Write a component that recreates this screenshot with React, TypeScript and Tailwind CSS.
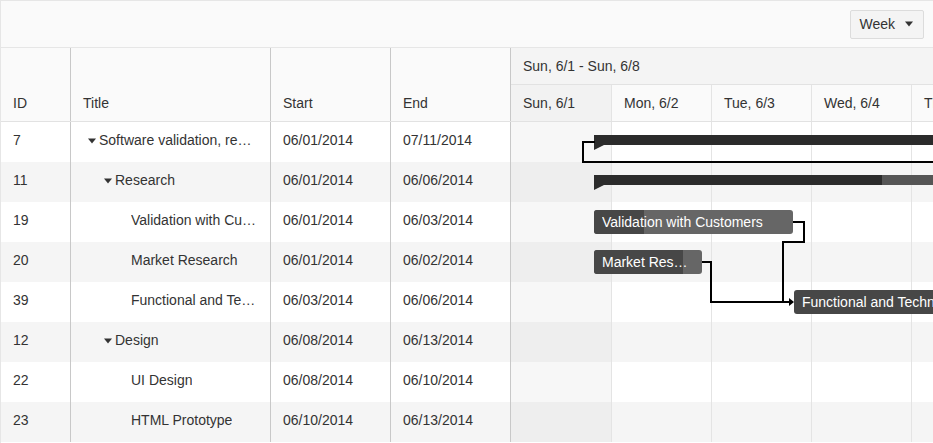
import React from "react";

type Row = {
  id: number;
  title: string;
  level: number;
  expandable: boolean;
  start: string;
  end: string;
};

const rows: Row[] = [
  { id: 7, title: "Software validation, research and implementation", level: 0, expandable: true, start: "06/01/2014", end: "07/11/2014" },
  { id: 11, title: "Research", level: 1, expandable: true, start: "06/01/2014", end: "06/06/2014" },
  { id: 19, title: "Validation with Customers", level: 2, expandable: false, start: "06/01/2014", end: "06/03/2014" },
  { id: 20, title: "Market Research", level: 2, expandable: false, start: "06/01/2014", end: "06/02/2014" },
  { id: 39, title: "Functional and Technical Specification", level: 2, expandable: false, start: "06/03/2014", end: "06/06/2014" },
  { id: 12, title: "Design", level: 1, expandable: true, start: "06/08/2014", end: "06/13/2014" },
  { id: 22, title: "UI Design", level: 2, expandable: false, start: "06/08/2014", end: "06/10/2014" },
  { id: 23, title: "HTML Prototype", level: 2, expandable: false, start: "06/10/2014", end: "06/13/2014" },
];

const days = ["Sun, 6/1", "Mon, 6/2", "Tue, 6/3", "Wed, 6/4", "Thu, 6/5", "Fri, 6/6", "Sat, 6/7"];

function Caret() {
  return (
    <svg width="8" height="6" viewBox="0 0 8 6" className="block">
      <polygon points="0,0.5 8,0.5 4,5.5" fill="#333" />
    </svg>
  );
}

function DayCells({ header, alt }: { header?: boolean; alt?: boolean }) {
  return (
    <>
      {days.map((d, i) => (
        <div
          key={d}
          className={
            (i === 0 ? "w-[101px] " : "w-[100px] ") +
            "shrink-0 h-full border-r border-[#e4e4e4] " +
            (header
              ? (i === 0 ? "bg-[#f2f2f2] " : "bg-[#fafafa] ") + "flex items-center px-3 whitespace-nowrap"
              : i === 0
              ? alt
                ? "bg-[#eeeeee]"
                : "bg-[#f7f7f7]"
              : "")
          }
        >
          {header ? d : null}
        </div>
      ))}
    </>
  );
}

export default function App() {
  return (
    <div className="w-[933px] h-[443px] overflow-hidden border-l border-t border-[#e6e6e6] bg-white text-[14px] text-[#333] font-['Liberation_Sans',Arial,Helvetica,sans-serif]">
      {/* Toolbar */}
      <div className="h-[47px] border-b border-[#e6e6e6] bg-[#fafafa] flex items-center justify-end pr-[9px]">
        <div className="h-[29px] pl-[8px] pr-[10px] border border-[#dcdcdc] bg-[#f4f4f4] rounded-[2px] flex items-center gap-[10px]">
          <span>Week</span>
          <svg width="8" height="6" viewBox="0 0 8 6">
            <polygon points="0,0.5 8,0.5 4,5.5" fill="#333" />
          </svg>
        </div>
      </div>

      <div className="flex">
        {/* Left grid */}
        <div className="w-[510px] shrink-0">
          <div className="h-[74px] border-b border-[#e2e2e2] bg-[#fafafa] flex">
            <div className="w-[70px] border-r border-[#c8c8c8] pt-[37px] px-3 flex items-center">ID</div>
            <div className="w-[200px] border-r border-[#c8c8c8] pt-[37px] px-3 flex items-center">Title</div>
            <div className="w-[120px] border-r border-[#c8c8c8] pt-[37px] px-3 flex items-center">Start</div>
            <div className="w-[120px] border-r border-[#c8c8c8] pt-[37px] px-3 flex items-center">End</div>
          </div>
          {rows.map((r, i) => (
            <div key={r.id} className={"h-[40px] flex " + (i % 2 === 1 ? "bg-[#f5f5f5]" : "bg-white")}>
              <div className="w-[70px] border-r border-[#c8c8c8] px-3 pb-[3px] flex items-center">{r.id}</div>
              <div className="w-[200px] border-r border-[#c8c8c8] pl-3 pr-3 pb-[3px] flex items-center min-w-0">
                <div className="shrink-0" style={{ width: r.level * 16 }} />
                <div className="w-[16px] shrink-0 pl-[5px]">{r.expandable ? <Caret /> : null}</div>
                <span className="truncate min-w-0">{r.title}</span>
              </div>
              <div className="w-[120px] border-r border-[#c8c8c8] px-3 pb-[3px] flex items-center">{r.start}</div>
              <div className="w-[120px] border-r border-[#c8c8c8] px-3 pb-[3px] flex items-center">{r.end}</div>
            </div>
          ))}
        </div>

        {/* Timeline */}
        <div className="flex-1 min-w-0 overflow-hidden">
          <div className="h-[37px] border-b border-[#e2e2e2] bg-[#f4f4f4] flex items-center px-3 whitespace-nowrap">
            Sun, 6/1 - Sun, 6/8
          </div>
          <div className="h-[37px] border-b border-[#e2e2e2] flex">
            <DayCells header />
          </div>
          <div className="relative">
            {rows.map((r, i) => (
              <div key={r.id} className={"h-[40px] flex " + (i % 2 === 1 ? "bg-[#f5f5f5]" : "bg-white")}>
                <DayCells alt={i % 2 === 1} />
              </div>
            ))}

            {/* Summary bar: Software validation */}
            <div className="absolute left-[83px] top-[13px] w-[400px] h-[10px] bg-[#2b2b2b]" />
            {/* Summary bar: Research */}
            <div className="absolute left-[83px] top-[53px] w-[350px] h-[10px] bg-[#555555]">
              <div className="w-[288px] h-full bg-[#2b2b2b]" />
            </div>

            {/* Task: Validation with Customers */}
            <div className="absolute left-[83px] top-[88px] w-[199px] h-[24px] rounded-[3px] bg-[#666666] overflow-hidden">
              <div className="absolute left-0 top-0 w-[50px] h-full bg-[#474747]" />
              <div className="relative h-full flex items-center px-2 text-white whitespace-nowrap">
                <span className="truncate">Validation with Customers</span>
              </div>
            </div>
            {/* Task: Market Research */}
            <div className="absolute left-[83px] top-[128px] w-[108px] h-[24px] rounded-[3px] bg-[#666666] overflow-hidden">
              <div className="absolute left-0 top-0 w-[89px] h-full bg-[#474747]" />
              <div className="relative h-full flex items-center px-2 text-white whitespace-nowrap min-w-0">
                <span className="truncate">Market Research</span>
              </div>
            </div>
            {/* Task: Functional and Technical Specification */}
            <div className="absolute left-[283px] top-[168px] w-[300px] h-[24px] rounded-[3px] bg-[#474747] overflow-hidden">
              <div className="h-full flex items-center px-2 text-white whitespace-nowrap">
                Functional and Technical Specification
              </div>
            </div>

            {/* Dependency lines */}
            <svg className="absolute left-0 top-0 pointer-events-none" width="422" height="320" viewBox="0 0 422 320">
              <polyline points="430,40 72,40 72,20 84,20" fill="none" stroke="#000" strokeWidth="2" />
              <polygon points="83,23 93,23 83,28" fill="#2b2b2b" />
              <polygon points="83,63 93,63 83,68" fill="#2b2b2b" />
              <polyline points="282,100 293,100 293,120 272,120 272,180 279,180" fill="none" stroke="#000" strokeWidth="2" />
              <polyline points="191,140 200,140 200,180 279,180" fill="none" stroke="#000" strokeWidth="2" />
              <polygon points="278,176 283,180 278,184" fill="#000" />
            </svg>
          </div>
        </div>
      </div>
    </div>
  );
}
